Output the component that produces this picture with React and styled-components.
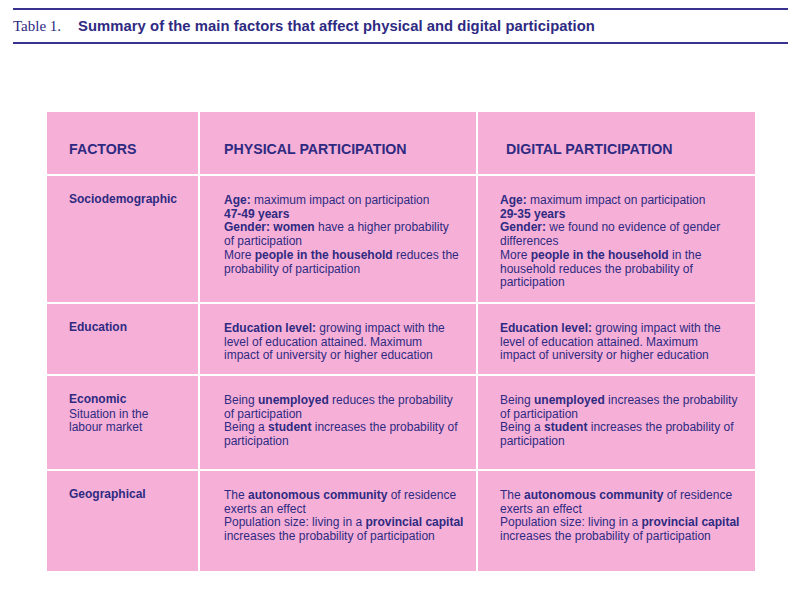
import React from "react";
import styled, { createGlobalStyle } from "styled-components";

const GlobalStyle = createGlobalStyle`
  body {
    margin: 0;
    background: #ffffff;
    font-family: "Liberation Sans", Arial, sans-serif;
    color: #2e2a82;
  }
`;

const Page = styled.div`
  width: 800px;
  height: 609px;
  padding-top: 8px;
  box-sizing: border-box;
`;

const Caption = styled.div`
  margin: 0 12px 0 13px;
  height: 32px;
  border-top: 2px solid #3a3290;
  border-bottom: 2px solid #3a3290;
  display: flex;
  align-items: center;
  gap: 16px;
`;

const CaptionLabel = styled.span`
  font-family: "Liberation Serif", "Times New Roman", serif;
  font-size: 15px;
  color: #2e2a82;
`;

const CaptionTitle = styled.span`
  font-size: 14.8px;
  font-weight: 700;
  letter-spacing: 0.05px;
  color: #2e2a82;
  margin-left: 1px;
`;

const Table = styled.div`
  margin: 68px 0 0 47px;
  width: 708px;
  display: grid;
  grid-template-columns: 151px 276px 277px;
  grid-template-rows: 62px 126px 70px 93px 100px;
  gap: 2px;
  background: #ffffff;
`;

const HeadCell = styled.div`
  background: #f6b0d7;
  display: flex;
  align-items: center;
  padding-left: ${(p) => p.$pad}px;
  padding-top: 11px;
  font-size: 14.2px;
  font-weight: 700;
`;

const Cell = styled.div`
  background: #f6b0d7;
  padding: ${(p) => p.$top}px 8px 0 ${(p) => p.$pad}px;
  font-size: 12px;
  line-height: 13.7px;
  white-space: nowrap;
`;

const Factor = styled.div`
  font-weight: 700;
  margin-bottom: 1px;
`;

const B = styled.b`
  font-weight: 700;
`;

const rows = [
  {
    factor: ["Sociodemographic"],
    physical: [
      [<B key="a">Age:</B>, " maximum impact on participation"],
      [<B key="a">47-49 years</B>],
      [<B key="a">Gender: women</B>, " have a higher probability"],
      ["of participation"],
      ["More ", <B key="a">people in the household</B>, " reduces the"],
      ["probability of participation"],
    ],
    digital: [
      [<B key="a">Age:</B>, " maximum impact on participation"],
      [<B key="a">29-35 years</B>],
      [<B key="a">Gender:</B>, " we found no evidence of gender"],
      ["differences"],
      ["More ", <B key="a">people in the household</B>, " in the"],
      ["household reduces the probability of"],
      ["participation"],
    ],
  },
  {
    factor: ["Education"],
    physical: [
      [<B key="a">Education level:</B>, " growing impact with the"],
      ["level of education attained. Maximum"],
      ["impact of university or higher education"],
    ],
    digital: [
      [<B key="a">Education level:</B>, " growing impact with the"],
      ["level of education attained. Maximum"],
      ["impact of university or higher education"],
    ],
  },
  {
    factor: ["Economic", "Situation in the", "labour market"],
    physical: [
      ["Being ", <B key="a">unemployed</B>, " reduces the probability"],
      ["of participation"],
      ["Being a ", <B key="a">student</B>, " increases the probability of"],
      ["participation"],
    ],
    digital: [
      ["Being ", <B key="a">unemployed</B>, " increases the probability"],
      ["of participation"],
      ["Being a ", <B key="a">student</B>, " increases the probability of"],
      ["participation"],
    ],
  },
  {
    factor: ["Geographical"],
    physical: [
      ["The ", <B key="a">autonomous community</B>, " of residence"],
      ["exerts an effect"],
      ["Population size: living in a ", <B key="a">provincial capital</B>],
      ["increases the probability of participation"],
    ],
    digital: [
      ["The ", <B key="a">autonomous community</B>, " of residence"],
      ["exerts an effect"],
      ["Population size: living in a ", <B key="a">provincial capital</B>],
      ["increases the probability of participation"],
    ],
  },
];

const Lines = ({ lines }) =>
  lines.map((line, i) => <div key={i}>{line}</div>);

export default function App() {
  return (
    <Page>
      <GlobalStyle />
      <Caption>
        <CaptionLabel>Table 1.</CaptionLabel>
        <CaptionTitle>
          Summary of the main factors that affect physical and digital participation
        </CaptionTitle>
      </Caption>
      <Table>
        <HeadCell $pad={22}>FACTORS</HeadCell>
        <HeadCell $pad={24}>PHYSICAL PARTICIPATION</HeadCell>
        <HeadCell $pad={28}>DIGITAL PARTICIPATION</HeadCell>
        {rows.map((row) => (
          <React.Fragment key={row.factor[0]}>
            <Cell $pad={22} $top={17}>
              <Factor>{row.factor[0]}</Factor>
              <Lines lines={row.factor.slice(1)} />
            </Cell>
            <Cell $pad={24} $top={18}>
              <Lines lines={row.physical} />
            </Cell>
            <Cell $pad={22} $top={18}>
              <Lines lines={row.digital} />
            </Cell>
          </React.Fragment>
        ))}
      </Table>
    </Page>
  );
}
